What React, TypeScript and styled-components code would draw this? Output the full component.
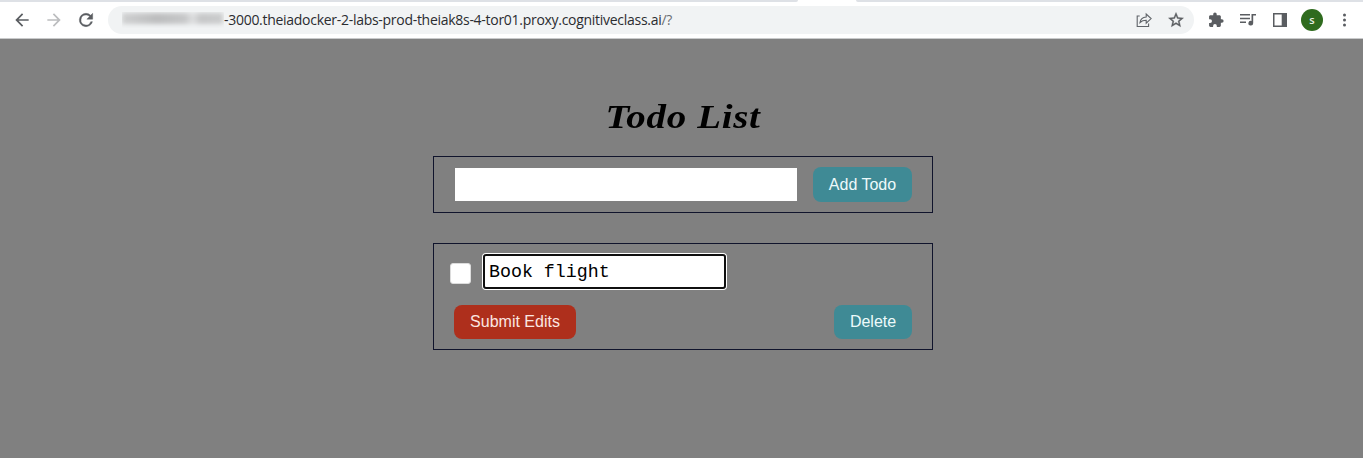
import React from "react";
import styled, { createGlobalStyle } from "styled-components";

const GlobalStyle = createGlobalStyle`
  *, *::before, *::after { box-sizing: border-box; }
  html, body { margin: 0; height: 100%; background: #808080; overflow: hidden; }
`;

const Page = styled.div`
  display: flex;
  flex-direction: column;
  width: 100%;
  height: 458px;
  background: #808080;
  font-family: "Liberation Sans", Arial, sans-serif;
`;

const TabStrip = styled.div`
  display: flex;
  justify-content: space-between;
  height: 2px;
  background: #fff;
`;

const StripPart = styled.div<{ $w: number; $side: "left" | "right" }>`
  width: ${(p) => p.$w}px;
  background: #dee1e6;
  border-radius: ${(p) => (p.$side === "left" ? "0 0 2px 0" : "0 0 0 2px")};
`;

const Toolbar = styled.header`
  display: flex;
  align-items: center;
  height: 37px;
  padding: 0 0 1px 12px;
  background: #fff;
  border-bottom: 1px solid #c9cacb;
`;

const NavIcons = styled.nav`
  display: flex;
  gap: 12px;
  width: 96px;
`;

const Icon = styled.svg<{ $c?: string }>`
  display: block;
  flex: none;
  fill: ${(p) => p.$c || "#5a5d61"};
`;

const AddressBar = styled.div`
  display: flex;
  align-items: center;
  width: 1086px;
  height: 28px;
  padding: 0 9px 0 14px;
  border-radius: 14px;
  background: #f1f3f4;
`;

const HiddenHost = styled.span`
  display: flex;
  align-items: center;
  width: 102px;
  height: 16px;
  overflow: hidden;
`;

const Smudge = styled.span`
  width: 101px;
  height: 11px;
  margin-top: -2px;
  background: linear-gradient(90deg, #cfd0d1, #bcbdbe 35%, #c6c7c8 62%, #dedfe0 70%, #c6c7c8 78%, #cbcccd);
  filter: blur(2px);
`;

const Address = styled.span`
  font: 14px/20px "Open Sans", "Noto Sans", sans-serif;
  letter-spacing: -0.285px;
  color: #2b2c30;
  white-space: nowrap;
`;

const AddressTail = styled.span`
  color: #6b6e72;
`;

const AddressActions = styled.div`
  display: flex;
  gap: 14px;
  margin-left: auto;
`;

const Extensions = styled.div`
  display: flex;
  align-items: center;
  gap: 14px;
  margin-left: 13px;
`;

const Avatar = styled.span`
  display: flex;
  align-items: center;
  justify-content: center;
  width: 22px;
  height: 22px;
  margin: 0 -1px 0 -2px;
  border-radius: 50%;
  background: #2f6b1e;
  color: #e9f0e6;
  font: 600 11px/22px "Open Sans", sans-serif;
`;

const Main = styled.main`
  display: flex;
  flex-direction: column;
  width: 500px;
  margin-left: 433px;
  padding-top: 58px;
`;

const Title = styled.h1`
  height: 40px;
  margin: 0 0 19px;
  text-align: center;
  color: #000;
  font: italic bold 34px/40px Georgia, "Liberation Serif", serif;
  letter-spacing: 0.6px;
  white-space: nowrap;
  transform: scaleX(1.145);
`;

const AddForm = styled.form`
  display: flex;
  align-items: center;
  justify-content: space-between;
  height: 57px;
  padding: 0 20px;
  border: 1px solid #10142c;
`;

const NewTodoInput = styled.input`
  width: 342px;
  height: 33px;
  margin-left: 1px;
  padding: 0 8px;
  border: 0;
  outline: 0;
  background: #fff;
  font-size: 16px;
`;

const Button = styled.button<{ $w: number; $h?: number; $danger?: boolean }>`
  width: ${(p) => p.$w}px;
  height: ${(p) => p.$h || 34}px;
  padding: 0;
  border: 0;
  border-radius: 8px;
  background: ${(p) => (p.$danger ? "#ae2f1c" : "#3f8a95")};
  color: ${(p) => (p.$danger ? "#fbe6e2" : "#edfafb")};
  font: 16px/20px "Liberation Sans", Arial, sans-serif;
  white-space: nowrap;
`;

const TodoItem = styled.section`
  display: flex;
  flex-direction: column;
  height: 107px;
  margin-top: 30px;
  padding: 10px 20px 10px 16px;
  border: 1px solid #10142c;
`;

const EditRow = styled.div`
  display: flex;
  align-items: center;
  gap: 12px;
  height: 35px;
`;

const Checkbox = styled.input`
  appearance: none;
  width: 21px;
  height: 21px;
  margin: 4px 0 0;
  border: 1px solid #dcdcdc;
  border-radius: 3px;
  background: #fff;
`;

const EditInput = styled.input`
  width: 243px;
  height: 35px;
  padding: 1px 4px 0;
  border: 2px solid #101010;
  border-radius: 3px;
  outline: 0;
  box-shadow: 0 0 0 1px #fff;
  background: #fff;
  color: #000;
  font: 18.3px "Liberation Mono", monospace;
`;

const ActionRow = styled.div`
  display: flex;
  justify-content: space-between;
  margin: 16px 0 0 4px;
`;

export default function App() {
  return (
    <Page>
      <GlobalStyle />
      <TabStrip>
        <StripPart $w={798} $side="left" />
        <StripPart $w={507} $side="right" />
      </TabStrip>
      <Toolbar>
        <NavIcons>
          <Icon width="20" height="20" viewBox="0 0 24 24">
            <path d="M20 11H7.83l5.59-5.59L12 4l-8 8 8 8 1.41-1.41L7.83 13H20v-2z" />
          </Icon>
          <Icon width="20" height="20" viewBox="0 0 24 24" $c="#bcbdbf">
            <path d="M12 4l-1.41 1.41L16.17 11H4v2h12.17l-5.58 5.59L12 20l8-8z" />
          </Icon>
          <Icon width="20" height="20" viewBox="0 0 24 24">
            <path stroke="#5a5d61" strokeWidth=".5" d="M17.65 6.35A7.96 7.96 0 0 0 12 4a8 8 0 1 0 7.73 10h-2.08A6 6 0 1 1 12 6c1.66 0 3.14.69 4.22 1.78L13 11h7V4l-2.35 2.35z" />
          </Icon>
        </NavIcons>
        <AddressBar>
          <HiddenHost><Smudge /></HiddenHost>
          <Address>
            -3000.theiadocker-2-labs-prod-theiak8s-4-tor01.proxy.cognitiveclass.ai<AddressTail>/?</AddressTail>
          </Address>
          <AddressActions>
            <Icon width="18" height="18" viewBox="0 0 18 18">
              <path fill="none" stroke="#5f6368" strokeWidth="1.1" d="M4.7 5H2.200v10.500h11.400v-3M5 11.500c.5-3.600 2.700-5.300 6.200-5.500V3l4.900 4.600-4.900 4.600V9.300c-2.700 0-4.600.6-6.200 2.200z" />
            </Icon>
            <Icon width="18" height="18" viewBox="0 0 24 24">
              <path stroke="#5a5d61" strokeWidth=".5" d="M22 9.24l-7.19-.62L12 2 9.19 8.63 2 9.24l5.46 4.73L5.82 21 12 17.27 18.18 21l-1.63-7.03L22 9.24zM12 15.4l-3.76 2.27 1-4.28-3.32-2.88 4.38-.38L12 6.1l1.71 4.04 4.38.38-3.32 2.88 1 4.28L12 15.4z" />
            </Icon>
          </AddressActions>
        </AddressBar>
        <Extensions>
          <Icon width="18" height="18" viewBox="-1 -1 26 26">
            <path d="M20.5 11H19V7c0-1.1-.9-2-2-2h-4V3.5a2.5 2.5 0 0 0-5 0V5H4c-1.1 0-2 .9-2 2v3.800h1.500a2.700 2.700 0 0 1 0 5.400H2V20c0 1.100.9 2 2 2h3.800v-1.500a2.700 2.700 0 0 1 5.400 0V22H17c1.100 0 2-.9 2-2v-4h1.500a2.500 2.500 0 0 0 0-5z" />
          </Icon>
          <Icon width="18" height="18" viewBox="0 0 18 18">
            <path d="M1 3h10v1.500H1zM1 6.700h10v1.500H1zM1 10.400h6v1.500H1zM12.500 3H17v1.600h-2.800v7.600a2.400 2.400 0 1 1-1.700-2.300z" />
          </Icon>
          <Icon width="18" height="18" viewBox="0 0 18 18">
            <path fillRule="evenodd" d="M2 2h14v14H2zM3.500 3.500v11h7.200v-11z" />
          </Icon>
          <Avatar>s</Avatar>
          <Icon width="18" height="18" viewBox="0 0 18 18">
            <circle cx="8.500" cy="4" r="1.500" />
            <circle cx="8.500" cy="9" r="1.500" />
            <circle cx="8.500" cy="14" r="1.500" />
          </Icon>
        </Extensions>
      </Toolbar>
      <Main>
        <Title>Todo List</Title>
        <AddForm onSubmit={(e) => e.preventDefault()}>
          <NewTodoInput type="text" />
          <Button $w={99} $h={35} type="submit">Add Todo</Button>
        </AddForm>
        <TodoItem>
          <EditRow>
            <Checkbox type="checkbox" />
            <EditInput type="text" defaultValue="Book flight" />
          </EditRow>
          <ActionRow>
            <Button $w={122} $danger>Submit Edits</Button>
            <Button $w={78}>Delete</Button>
          </ActionRow>
        </TodoItem>
      </Main>
    </Page>
  );
}
